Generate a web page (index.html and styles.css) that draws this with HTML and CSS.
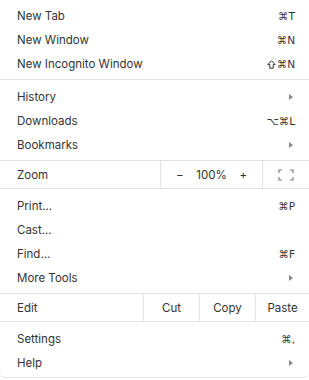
FILE: index.html
```html
<!DOCTYPE html>
<html lang="en">

<head>
    <meta charset="UTF-8">
    <meta name="viewport" content="width=device-width, initial-scale=1.0">
    <title>Chrome Menu</title>
    <link rel="stylesheet" href="styles.css">
</head>

<body>

    <div class="menu">
        <div class="section first">
            <div class="item"><span>New Tab</span><span class="key">⌘T</span></div>
            <div class="item"><span>New Window</span><span class="key">⌘N</span></div>
            <div class="item"><span>New Incognito Window</span>
                <span class="key">
                    <svg class="shift" width="9" height="9" viewBox="0 0 9 9" fill="none" stroke="#333" stroke-width="1">
                        <path d="M4.5 0.8L8.2 4.6H6.2V8.2H2.8V4.6H0.8Z" />
                    </svg>⌘N
                </span>
            </div>
        </div>

        <div class="section">
            <div class="item"><span>History</span><span class="arrow"></span></div>
            <div class="item"><span>Downloads</span><span class="key">⌥⌘L</span></div>
            <div class="item"><span>Bookmarks</span><span class="arrow"></span></div>
        </div>

        <div class="zoom">
            <span class="label">Zoom</span>
            <div class="zoom-ctrl">
                <span>−</span>
                <span>100%</span>
                <span>+</span>
            </div>
            <div class="full">
                <svg width="16" height="12" viewBox="0 0 16 12" fill="none" stroke="#777" stroke-width="1.1">
                    <path d="M1 4V1H4M12 1H15V4M15 8V11H12M4 11H1V8" />
                </svg>
            </div>
        </div>

        <div class="section">
            <div class="item"><span>Print...</span><span class="key">⌘P</span></div>
            <div class="item"><span>Cast...</span></div>
            <div class="item"><span>Find...</span><span class="key">⌘F</span></div>
            <div class="item"><span>More Tools</span><span class="arrow"></span></div>
        </div>

        <div class="edit">
            <span class="label">Edit</span>
            <span class="btn">Cut</span>
            <span class="btn">Copy</span>
            <span class="btn">Paste</span>
        </div>

        <div class="section last">
            <div class="item"><span>Settings</span><span class="key">⌘,</span></div>
            <div class="item"><span>Help</span><span class="arrow"></span></div>
        </div>
    </div>

</body>

</html>
```

FILE: styles.css
```css
* {
    margin: 0;
    padding: 0;
    box-sizing: border-box;
}

body {
    width: 309px;
    height: 380px;
    background: #fff;
    font-family: "Inter", "Liberation Sans", sans-serif;
    font-size: 11.5px;
    color: #333;
    overflow: hidden;
}

.menu {
    width: 309px;
    height: 378px;
    padding-top: 3px;
    background: #fff;
    border-bottom: 1px solid #e4e4e4;
    border-radius: 0 0 6px 6px;
}

.section {
    padding: 4px 0;
    border-bottom: 1px solid #e3e3e3;
}

.section.first {
    padding-top: 0;
}

.section.last {
    border-bottom: none;
}

.item {
    height: 24px;
    display: flex;
    align-items: center;
    justify-content: space-between;
    padding: 2px 14px 0 17px;
}

.key {
    display: flex;
    align-items: center;
    font-family: "DejaVu Sans", sans-serif;
    font-size: 10.5px;
    color: #333;
}

.shift {
    margin-right: 1px;
}

.arrow {
    width: 0;
    height: 0;
    border-left: 4px solid #888;
    border-top: 3px solid transparent;
    border-bottom: 3px solid transparent;
    margin-right: 2px;
}

.zoom {
    height: 28px;
    display: flex;
    align-items: center;
    border-bottom: 1px solid #e3e3e3;
}

.label {
    width: 160px;
    padding: 1px 0 0 17px;
}

.zoom-ctrl {
    height: 100%;
    width: 103px;
    display: flex;
    align-items: center;
    justify-content: space-between;
    padding: 1px 15px 0;
    border-left: 1px solid #e3e3e3;
    border-right: 1px solid #e3e3e3;
}

.full {
    flex: 1;
    display: flex;
    justify-content: center;
    padding-right: 1px;
}

.edit {
    height: 28px;
    display: flex;
    align-items: center;
    border-bottom: 1px solid #e3e3e3;
}

.edit .label {
    width: 143px;
}

.btn {
    height: 100%;
    width: 56px;
    display: flex;
    align-items: center;
    justify-content: center;
    padding-top: 1px;
    border-left: 1px solid #e3e3e3;
}

.btn:last-child {
    flex: 1;
}
```
